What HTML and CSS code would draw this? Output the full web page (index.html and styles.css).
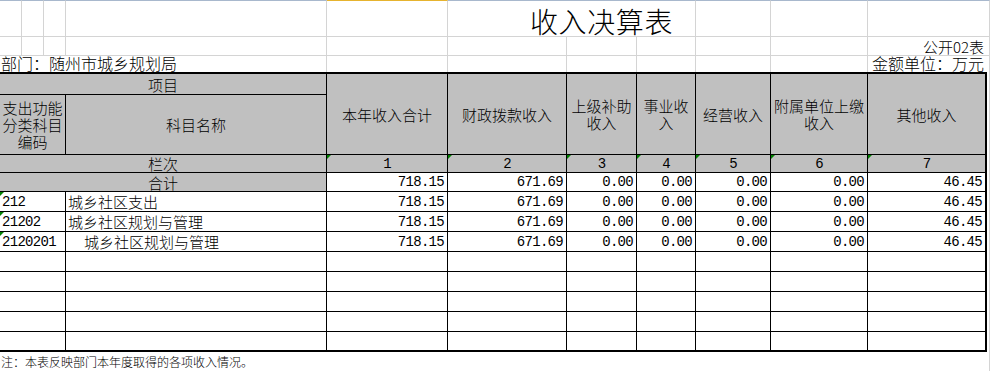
FILE: index.html
```html
<!DOCTYPE html>
<html lang="zh-CN">
<head>
<meta charset="utf-8">
<title>收入决算表</title>
<link rel="stylesheet" href="styles.css">
</head>
<body>
<div class="page">
  <div class="top">
    <div class="g r1"></div><div class="g r1"></div><div class="g r1"></div><div class="g r1"></div><div class="g r1 sel"></div>
    <div class="g r1 title span3">收入决算表</div>
    <div class="g r1"></div><div class="g r1"></div><div class="g r1"></div>

    <div class="g"></div><div class="g"></div><div class="g"></div><div class="g"></div><div class="g"></div>
    <div class="g"></div><div class="g"></div><div class="g"></div><div class="g"></div><div class="g"></div>
    <div class="g right pub">公开02表</div>

    <div class="g r3 span4 dept">部门：随州市城乡规划局</div>
    <div class="g r3"></div><div class="g r3"></div><div class="g r3"></div><div class="g r3"></div><div class="g r3"></div><div class="g r3"></div>
    <div class="g r3 right unit">金额单位：万元</div>
  </div>

  <div class="wrap">
    <div class="tbl">
      <div class="c hd span2">项目</div>
      <div class="c hd rs2">本年收入合计</div>
      <div class="c hd rs2">财政拨款收入</div>
      <div class="c hd rs2">上级补助收入</div>
      <div class="c hd rs2">事业收入</div>
      <div class="c hd rs2">经营收入</div>
      <div class="c hd rs2">附属单位上缴收入</div>
      <div class="c hd rs2 last">其他收入</div>
      <div class="c hd">支出功能分类科目编码</div>
      <div class="c hd">科目名称</div>

      <div class="c hd span2">栏次</div>
      <div class="c hd num-c mk">1</div>
      <div class="c hd num-c mk">2</div>
      <div class="c hd num-c mk">3</div>
      <div class="c hd num-c mk">4</div>
      <div class="c hd num-c mk">5</div>
      <div class="c hd num-c mk">6</div>
      <div class="c hd num-c mk last">7</div>

      <div class="c hd span2">合计</div>
      <div class="c num">718.15</div>
      <div class="c num">671.69</div>
      <div class="c num">0.00</div>
      <div class="c num">0.00</div>
      <div class="c num">0.00</div>
      <div class="c num">0.00</div>
      <div class="c num last">46.45</div>

      <div class="c code mk">212</div>
      <div class="c name">城乡社区支出</div>
      <div class="c num">718.15</div>
      <div class="c num">671.69</div>
      <div class="c num">0.00</div>
      <div class="c num">0.00</div>
      <div class="c num">0.00</div>
      <div class="c num">0.00</div>
      <div class="c num last">46.45</div>

      <div class="c code mk">21202</div>
      <div class="c name">城乡社区规划与管理</div>
      <div class="c num">718.15</div>
      <div class="c num">671.69</div>
      <div class="c num">0.00</div>
      <div class="c num">0.00</div>
      <div class="c num">0.00</div>
      <div class="c num">0.00</div>
      <div class="c num last">46.45</div>

      <div class="c code mk">2120201</div>
      <div class="c name indent">城乡社区规划与管理</div>
      <div class="c num">718.15</div>
      <div class="c num">671.69</div>
      <div class="c num">0.00</div>
      <div class="c num">0.00</div>
      <div class="c num">0.00</div>
      <div class="c num">0.00</div>
      <div class="c num last">46.45</div>

      <div class="c"></div><div class="c"></div><div class="c"></div><div class="c"></div><div class="c"></div><div class="c"></div><div class="c"></div><div class="c"></div><div class="c last"></div>
      <div class="c"></div><div class="c"></div><div class="c"></div><div class="c"></div><div class="c"></div><div class="c"></div><div class="c"></div><div class="c"></div><div class="c last"></div>
      <div class="c"></div><div class="c"></div><div class="c"></div><div class="c"></div><div class="c"></div><div class="c"></div><div class="c"></div><div class="c"></div><div class="c last"></div>
      <div class="c"></div><div class="c"></div><div class="c"></div><div class="c"></div><div class="c"></div><div class="c"></div><div class="c"></div><div class="c"></div><div class="c last"></div>
      <div class="c bot"></div><div class="c bot"></div><div class="c bot"></div><div class="c bot"></div><div class="c bot"></div><div class="c bot"></div><div class="c bot"></div><div class="c bot"></div><div class="c bot last"></div>
    </div>
    <div class="edge"></div>
  </div>

  <div class="note-row">
    <div class="note">注：本表反映部门本年度取得的各项收入情况。</div>
    <div class="edge"></div>
  </div>
</div>
</body>
</html>
```

FILE: styles.css
```css
* { box-sizing: border-box; }
html, body { margin: 0; padding: 0; background: #fff; }
body {
  font-family: "Noto Sans CJK SC", "Noto Sans", sans-serif;
  font-weight: 300;
  color: #000;
  width: 991px;
  height: 371px;
  overflow: hidden;
}
.page { width: 991px; }

/* spreadsheet area above the table */
.top {
  display: grid;
  grid-template-columns: 22px 22px 22px 261px 121px 119px 70px 59px 75px 97px 122px;
  grid-template-rows: 37px 19px 16px;
}
.g {
  border-right: 1px solid #d4d4d4;
  border-bottom: 1px solid #d4d4d4;
  display: flex;
  align-items: center;
  font-size: 16px;
  line-height: 16px;
  white-space: nowrap;
}
.r1 { border-top: 1px solid #a8b8cd; }
.r1.sel { border-top-color: #e6b32e; }
.r3 { border-bottom: none; align-items: flex-end; }
.span3 { grid-column: span 3; }
.span4 { grid-column: span 4; }
.title {
  font-size: 28px;
  line-height: 30px;
  letter-spacing: 0.6px;
  padding-left: 82px;
  padding-top: 4px;
}
.right { justify-content: flex-end; padding-right: 5px; }
.pub { font-size: 15px; line-height: 15px; padding-top: 1px; }
.dept { padding-left: 1px; line-height: 15px; padding-bottom: 1px; }
.unit { line-height: 15px; padding-bottom: 1px; }

/* table */
.wrap { display: flex; }
.tbl {
  width: 987px;
  display: grid;
  grid-template-columns: 66px 261px 121px 119px 70px 59px 75px 97px 119px;
  grid-template-rows: 21px 60px 18px 19px repeat(8, 20px);
  border-top: 2px solid #000;
}
.edge {
  width: 3px;
  border-right: 1px solid #d4d4d4;
}
.c {
  border-right: 1px solid #000;
  border-bottom: 1px solid #000;
  display: flex;
  align-items: center;
  font-size: 15px;
  line-height: 17px;
  white-space: nowrap;
  position: relative;
}
.c.last { border-right-width: 2px; }
.c.bot { border-bottom-width: 2px; }
.hd {
  background: #c0c0c0;
  justify-content: center;
  text-align: center;
  white-space: normal;
  padding: 0 2px;
}
.span2 { grid-column: span 2; }
.rs2 { grid-row: span 2; }

.num, .num-c, .code {
  font-family: "Liberation Mono", "DejaVu Sans Mono", monospace;
  font-weight: 400;
  font-size: 14px;
  letter-spacing: -0.7px;
}
.num { justify-content: flex-end; padding-right: 3px; padding-top: 1px; }
.num-c { padding-top: 1px; }
.code { padding-left: 2px; padding-top: 1px; }
.name { padding-left: 2px; }
.name.indent { padding-left: 18px; }

.mk::before {
  content: "";
  position: absolute;
  top: 0;
  left: 0;
  width: 0;
  height: 0;
  border-top: 4px solid #008000;
  border-right: 4px solid transparent;
}

.note-row { display: flex; height: 19px; }
.note {
  width: 987px;
  font-size: 12px;
  line-height: 16px;
  padding-top: 2px;
  padding-left: 1px;
  white-space: nowrap;
}
```
